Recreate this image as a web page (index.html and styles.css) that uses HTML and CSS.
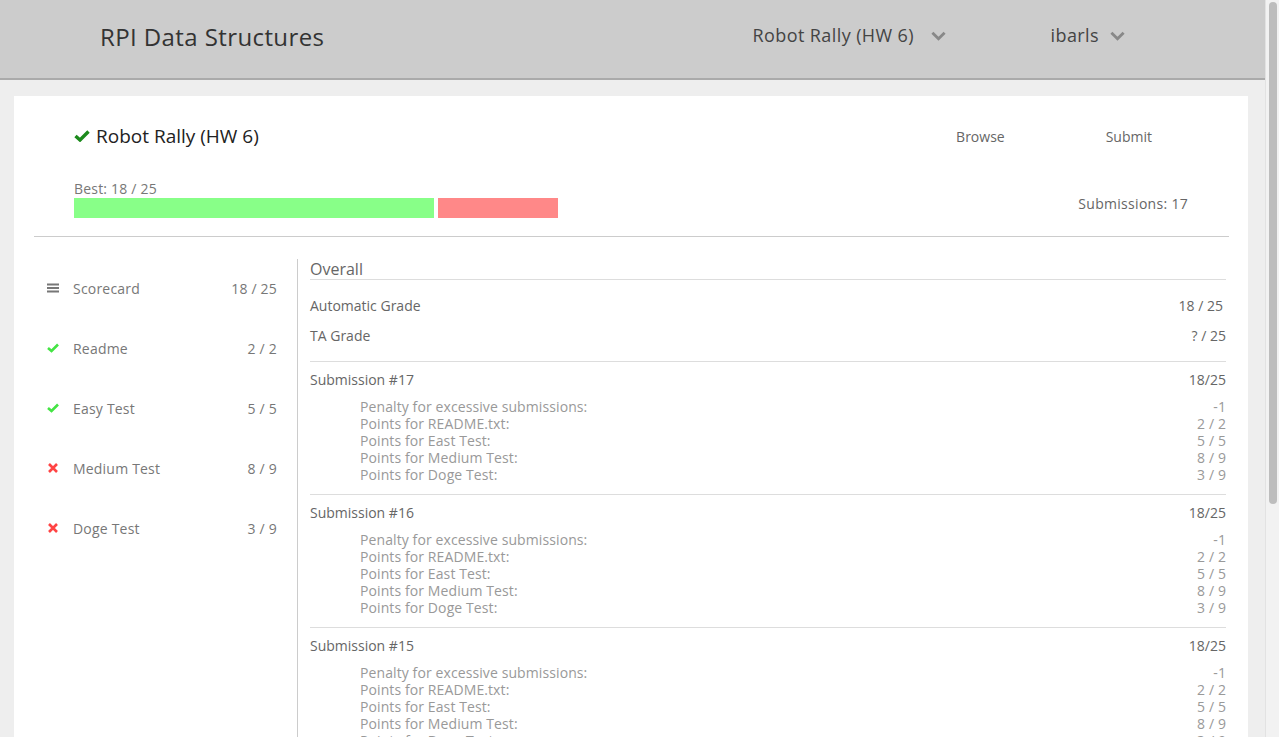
FILE: index.html
```html
<!DOCTYPE html>
<html>
<head>
<meta charset="utf-8">
<link rel="stylesheet" href="styles.css">
</head>
<body>
<header class="topbar">
  <div class="brand">RPI Data Structures</div>
  <nav class="topnav">
    <div class="navitem nav-hw">Robot Rally (HW 6)
      <svg class="chev" viewBox="0 0 16 10" width="15" height="10"><path d="M1.5 1.5 L8 8 L14.5 1.5" fill="none" stroke="#888" stroke-width="3"/></svg>
    </div>
    <div class="navitem nav-user">ibarls
      <svg class="chev" viewBox="0 0 16 10" width="15" height="10"><path d="M1.5 1.5 L8 8 L14.5 1.5" fill="none" stroke="#888" stroke-width="3"/></svg>
    </div>
  </nav>
</header>

<main class="card">
  <section class="summary">
    <div class="summary-top">
      <h1 class="hw-title"><svg class="ico" viewBox="0 0 16 12" width="16" height="12"><path d="M1.5 6 L6 10 L14.5 1.5" fill="none" stroke="#1c8a1c" stroke-width="3.4"/></svg>Robot Rally (HW 6)</h1>
      <div class="actions"><a class="act">Browse</a><a class="act">Submit</a></div>
    </div>
    <div class="summary-bottom">
      <div class="best">
        <div class="best-label">Best: 18 / 25</div>
        <div class="bar"><span class="bar-ok" style="width:360px"></span><span class="bar-bad" style="width:120px"></span></div>
      </div>
      <div class="subcount">Submissions: 17</div>
    </div>
  </section>

  <div class="body">
    <aside class="side">
      <div class="sitem"><span class="sicon"><svg viewBox="0 0 12 10" width="12" height="10"><path d="M0 1.5H12M0 5H12M0 8.5H12" stroke="#777" stroke-width="2"/></svg></span><span class="slabel">Scorecard</span><span class="sscore">18 / 25</span></div>
      <div class="sitem"><span class="sicon"><svg viewBox="0 0 12 10" width="12" height="10"><path d="M1 5 L4.5 8 L11 1.5" fill="none" stroke="#44e444" stroke-width="2.6"/></svg></span><span class="slabel">Readme</span><span class="sscore">2 / 2</span></div>
      <div class="sitem"><span class="sicon"><svg viewBox="0 0 12 10" width="12" height="10"><path d="M1 5 L4.5 8 L11 1.5" fill="none" stroke="#44e444" stroke-width="2.6"/></svg></span><span class="slabel">Easy Test</span><span class="sscore">5 / 5</span></div>
      <div class="sitem"><span class="sicon"><svg viewBox="0 0 12 10" width="12" height="10"><path d="M2 1 L10 9 M10 1 L2 9" stroke="#ff4444" stroke-width="2.6"/></svg></span><span class="slabel">Medium Test</span><span class="sscore">8 / 9</span></div>
      <div class="sitem"><span class="sicon"><svg viewBox="0 0 12 10" width="12" height="10"><path d="M2 1 L10 9 M10 1 L2 9" stroke="#ff4444" stroke-width="2.6"/></svg></span><span class="slabel">Doge Test</span><span class="sscore">3 / 9</span></div>
    </aside>

    <section class="detail">
      <h2 class="overall">Overall</h2>
      <div class="grades">
        <div class="grow"><span>Automatic Grade</span><span class="gval gval-auto">18 / 25</span></div>
        <div class="grow"><span>TA Grade</span><span class="gval">? / 25</span></div>
      </div>

      <div class="sub">
        <div class="subhead"><span>Submission #17</span><span>18/25</span></div>
        <div class="lines">
          <div class="line"><span>Penalty for excessive submissions:</span><span>-1</span></div>
          <div class="line"><span>Points for README.txt:</span><span>2 / 2</span></div>
          <div class="line"><span>Points for East Test:</span><span>5 / 5</span></div>
          <div class="line"><span>Points for Medium Test:</span><span>8 / 9</span></div>
          <div class="line"><span>Points for Doge Test:</span><span>3 / 9</span></div>
        </div>
      </div>

      <div class="sub">
        <div class="subhead"><span>Submission #16</span><span>18/25</span></div>
        <div class="lines">
          <div class="line"><span>Penalty for excessive submissions:</span><span>-1</span></div>
          <div class="line"><span>Points for README.txt:</span><span>2 / 2</span></div>
          <div class="line"><span>Points for East Test:</span><span>5 / 5</span></div>
          <div class="line"><span>Points for Medium Test:</span><span>8 / 9</span></div>
          <div class="line"><span>Points for Doge Test:</span><span>3 / 9</span></div>
        </div>
      </div>

      <div class="sub">
        <div class="subhead"><span>Submission #15</span><span>18/25</span></div>
        <div class="lines">
          <div class="line"><span>Penalty for excessive submissions:</span><span>-1</span></div>
          <div class="line"><span>Points for README.txt:</span><span>2 / 2</span></div>
          <div class="line"><span>Points for East Test:</span><span>5 / 5</span></div>
          <div class="line"><span>Points for Medium Test:</span><span>8 / 9</span></div>
          <div class="line"><span>Points for Doge Test:</span><span>3 / 9</span></div>
        </div>
      </div>
    </section>
  </div>
</main>

<div class="fake-scroll"><div class="fake-thumb"></div></div>
</body>
</html>
```

FILE: styles.css
```css
html, body {
  margin: 0;
  padding: 0;
}
html {
  overflow: hidden;
  height: 737px;
}
body {
  background: #eeeeee;
  font-family: "Open Sans", "Noto Sans", sans-serif;
  color: #666;
  margin-right: 14px;
  height: 737px;
  overflow: hidden;
}
.fake-scroll {
  position: fixed;
  top: 0;
  right: 0;
  bottom: 0;
  width: 14px;
  background: #f2f2f2;
  border-left: 1px solid #e2e2e2;
  box-sizing: border-box;
}
.fake-thumb {
  position: absolute;
  top: 2px;
  left: 3px;
  width: 8px;
  height: 502px;
  border-radius: 4px;
  background: #bdbdbd;
}
.topbar {
  height: 78px;
  background: #cccccc;
  border-bottom: 2px solid #aaaaaa;
  display: flex;
  align-items: center;
}
.brand {
  margin-left: 100px;
  font-size: 24px;
  letter-spacing: 0.4px;
  color: #333;
  padding-bottom: 5px;
}
.topnav {
  display: flex;
  margin-left: auto;
  margin-right: 140px;
}
.navitem {
  font-size: 18px;
  letter-spacing: 0.4px;
  color: #444;
  display: flex;
  align-items: center;
  padding-bottom: 8px;
}
.nav-hw { width: 298px; }
.nav-hw .chev { margin-left: 17px; }
.nav-user .chev { margin-left: 11px; }
.chev { margin-top: 2px; }

.card {
  background: #fff;
  margin: 16px 17px 0 14px;
  padding: 0 19px 0 20px;
  min-height: 900px;
}
.summary {
  padding: 25px 40px 18px 40px;
  border-bottom: 1px solid #cccccc;
}
.summary-top {
  display: flex;
  align-items: center;
}
.hw-title {
  margin: 0;
  font-size: 19px;
  font-weight: normal;
  color: #222;
  display: flex;
  align-items: center;
  padding-top: 2px;
}
.hw-title .ico { margin-right: 6px; }
.actions {
  margin-left: auto;
  display: flex;
  margin-right: 37px;
  padding-top: 3px;
}
.act {
  font-size: 14px;
  color: #666;
  margin-left: 101px;
}
.summary-bottom {
  display: flex;
  align-items: flex-end;
  margin-top: 31px;
}
.best-label {
  font-size: 14px;
  letter-spacing: 0.2px;
  color: #777;
  line-height: 18px;
}
.bar {
  display: flex;
  gap: 4px;
  margin-top: 0;
  height: 20px;
}
.bar-ok { background: #88ff88; display: block; }
.bar-bad { background: #ff8888; display: block; }
.subcount {
  margin-left: auto;
  font-size: 14px;
  letter-spacing: 0.3px;
  color: #666;
  margin-right: 1px;
  padding-bottom: 5px;
}

.body {
  display: flex;
  padding-top: 22px;
}
.side {
  width: 263px;
  border-right: 1px solid #cccccc;
  padding-top: 16px;
}
.sitem {
  display: flex;
  align-items: center;
  height: 26px;
  margin: 0 0 34px 0;
  font-size: 14px;
  color: #777;
  padding-left: 13px;
  padding-right: 20px;
  letter-spacing: 0.2px;
}
.sicon {
  width: 26px;
  display: flex;
  align-items: center;
}
.slabel { flex: 1; }
.sscore { text-align: right; }

.detail {
  flex: 1;
  padding-left: 12px;
  padding-right: 3px;
}
.overall {
  margin: 0;
  font-size: 16px;
  font-weight: normal;
  color: #666;
  line-height: 20px;
  border-bottom: 1px solid #dddddd;
}
.grades {
  padding: 11px 0 10px 0;
  border-bottom: 1px solid #dddddd;
}
.grow {
  display: flex;
  justify-content: space-between;
  font-size: 14px;
  color: #666;
  height: 30px;
  line-height: 30px;
}
.gval-auto { margin-right: 3px; }
.sub {
  border-bottom: 1px solid #dddddd;
  padding: 8px 0 11px 0;
}
.subhead {
  display: flex;
  justify-content: space-between;
  font-size: 14px;
  color: #666;
  line-height: 20px;
  margin-bottom: 8px;
}
.lines {
  padding-left: 50px;
}
.line {
  display: flex;
  justify-content: space-between;
  font-size: 14px;
  letter-spacing: 0.1px;
  color: #999;
  line-height: 17px;
}
```
